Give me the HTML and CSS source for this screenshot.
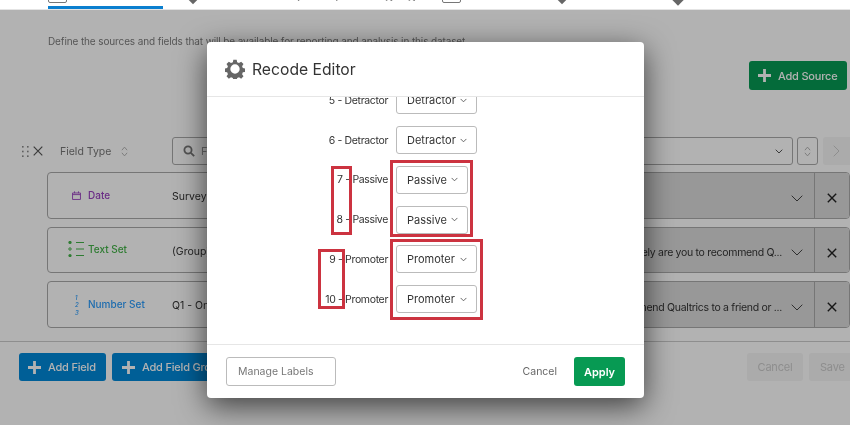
FILE: index.html
```html
<!DOCTYPE html>
<html lang="en">
<head>
<meta charset="utf-8">
<title>Recode Editor</title>
<link rel="stylesheet" href="styles.css">
</head>
<body>
<div class="page">
  <nav class="topnav">
    <div class="tab tab-active"><span class="tab-glyph"></span></div>
    <div class="tab tab-pin"><span class="pin"></span></div>
    <div class="tab tab-words">Reports, Managing</div>
    <div class="tab tab-box"><span class="tab-glyph"></span></div>
    <div class="tab tab-pin2"><span class="pin"></span></div>
    <div class="tab tab-pin3"><span class="pin diamond"></span></div>
  </nav>
  <main class="content">
    <div class="intro-row">
      <p class="intro">Define the sources and fields that will be available for reporting and analysis in this dataset.</p>
      <button class="btn btn-green add-source"><svg class="plus" viewBox="0 0 12 12"><path d="M6 0v12M0 6h12"/></svg>Add Source</button>
    </div>
    <div class="field-head">
      <svg class="drag" viewBox="0 0 7 11"><g><rect x="0" y="0" width="1.6" height="1.6"/><rect x="5" y="0" width="1.6" height="1.6"/><rect x="0" y="4.7" width="1.6" height="1.6"/><rect x="5" y="4.7" width="1.6" height="1.6"/><rect x="0" y="9.4" width="1.6" height="1.6"/><rect x="5" y="9.4" width="1.6" height="1.6"/></g></svg>
      <svg class="x-small" viewBox="0 0 10 10"><path d="M.7.7l8.6 8.6M9.3.7L.7 9.3"/></svg>
      <span class="field-type">Field Type</span>
      <svg class="updown" viewBox="0 0 8 12"><path d="M1 4.500L4 1l3 3.500M1 7.500L4 11l3-3.500"/></svg>
      <div class="search"><svg class="mag" viewBox="0 0 12 12"><circle cx="5" cy="5" r="3.600"/><path d="M7.800 7.800L11.200 11.200"/></svg><span class="search-hint">F</span><svg class="chev chev-search" viewBox="0 0 8 5"><path d="M.7.7L4 4l3.300-3.300"/></svg></div>
      <div class="sort-box"><svg class="updown" viewBox="0 0 8 12"><path d="M1 4.500L4 1l3 3.500M1 7.500L4 11l3-3.500"/></svg></div>
      <div class="next-box"><svg class="next" viewBox="0 0 7 12"><path d="M.7.7L6 6 .7 11.300"/></svg></div>
    </div>
    <div class="cards">
      <div class="card">
        <div class="card-type purple"><svg class="ico" viewBox="0 0 10 10"><path d="M.6 2.200h8.800v7.200H.6zM.6 4h8.800M2.800.4v2M7.200.4v2"/></svg><span class="type-name">Date</span></div>
        <div class="card-source">Survey Metadata</div>
        <div class="card-end"><svg class="chev chev-card" viewBox="0 0 12 7"><path d="M.7.7L6 6 11.300.7"/></svg></div>
        <div class="card-x"><svg class="x-card" viewBox="0 0 10 10"><path d="M.8.8l8.400 8.400M9.200.8L.8 9.200"/></svg></div>
      </div>
      <div class="card">
        <div class="card-type green"><svg class="ico-list" viewBox="0 0 16 16"><circle cx="2" cy="1.500" r="1.600" class="fill"/><circle cx="2" cy="8" r="1.200" class="hollow"/><circle cx="2" cy="14.500" r="1.600" class="fill"/><path d="M8 1.500h8M8 8h8M8 14.500h8"/></svg><span class="type-name">Text Set</span></div>
        <div class="card-source">(Group)</div>
        <div class="card-end"><span class="card-q">How likely are you to recommend Q...</span><svg class="chev chev-card" viewBox="0 0 12 7"><path d="M.7.7L6 6 11.300.7"/></svg></div>
        <div class="card-x"><svg class="x-card" viewBox="0 0 10 10"><path d="M.8.8l8.400 8.400M9.200.8L.8 9.200"/></svg></div>
      </div>
      <div class="card">
        <div class="card-type blue"><span class="num-stack"><i>1</i><i>2</i><i>3</i></span><span class="type-name">Number Set</span></div>
        <div class="card-source">Q1 - On</div>
        <div class="card-end"><span class="card-q">recommend Qualtrics to a friend or ...</span><svg class="chev chev-card" viewBox="0 0 12 7"><path d="M.7.7L6 6 11.300.7"/></svg></div>
        <div class="card-x"><svg class="x-card" viewBox="0 0 10 10"><path d="M.8.8l8.400 8.400M9.200.8L.8 9.200"/></svg></div>
      </div>
    </div>
    <footer class="page-foot">
      <button class="btn btn-blue add-field"><svg class="plus" viewBox="0 0 12 12"><path d="M6 0v12M0 6h12"/></svg>Add Field</button>
      <button class="btn btn-blue"><svg class="plus" viewBox="0 0 12 12"><path d="M6 0v12M0 6h12"/></svg>Add Field Group</button>
      <span class="spacer"></span>
      <button class="btn btn-muted btn-cancel">Cancel</button>
      <button class="btn btn-muted btn-save">Save</button>
    </footer>
  </main>
  <div class="overlay"></div>
  <section class="modal">
    <header class="modal-head">
      <svg class="gear" viewBox="0 0 24 24"><path fill-rule="evenodd" d="M10 1h4l.6 3 2.200.9 2.600-1.700 2.800 2.800-1.700 2.600.9 2.200 3 .6v4l-3 .6-.9 2.200 1.700 2.600-2.800 2.800-2.600-1.700-2.200.9-.6 3h-4l-.6-3-2.200-.9-2.600 1.700-2.800-2.800 1.700-2.600-.9-2.200-3-.6v-4l3-.6.9-2.200-1.700-2.600 2.800-2.800 2.600 1.700L9.400 4zM12 6.400a5.600 5.600 0 1 0 0 11.200a5.600 5.600 0 0 0 0-11.200z"/></svg>
      <h1>Recode Editor</h1>
    </header>
    <div class="modal-body">
      <div class="rows">
        <div class="row"><span class="row-label">5 - Detractor</span><div class="select sel-wide">Detractor<svg class="chev chev-sel" viewBox="0 0 8 5"><path d="M.7.7L4 4l3.300-3.300"/></svg></div></div>
        <div class="row"><span class="row-label">6 - Detractor</span><div class="select sel-wide">Detractor<svg class="chev chev-sel" viewBox="0 0 8 5"><path d="M.7.7L4 4l3.300-3.300"/></svg></div></div>
        <div class="row"><span class="row-label">7 - Passive</span><div class="select sel-narrow">Passive<svg class="chev chev-sel" viewBox="0 0 8 5"><path d="M.7.7L4 4l3.300-3.300"/></svg></div></div>
        <div class="row"><span class="row-label">8 - Passive</span><div class="select sel-narrow">Passive<svg class="chev chev-sel" viewBox="0 0 8 5"><path d="M.7.7L4 4l3.300-3.300"/></svg></div></div>
        <div class="row"><span class="row-label">9 - Promoter</span><div class="select sel-wide">Promoter<svg class="chev chev-sel" viewBox="0 0 8 5"><path d="M.7.7L4 4l3.300-3.300"/></svg></div></div>
        <div class="row"><span class="row-label">10 - Promoter</span><div class="select sel-wide">Promoter<svg class="chev chev-sel" viewBox="0 0 8 5"><path d="M.7.7L4 4l3.300-3.300"/></svg></div></div>
      </div>
    </div>
    <footer class="modal-foot">
      <button class="btn-labels">Manage Labels</button>
      <span class="spacer"></span>
      <button class="btn-text">Cancel</button>
      <button class="btn-apply">Apply</button>
    </footer>
  </section>
  <div class="mark mark-a"></div>
  <div class="mark mark-b"></div>
  <div class="mark mark-c"></div>
  <div class="mark mark-d"></div>
</div>
</body>
</html>
```

FILE: styles.css
```css
* { box-sizing: border-box; }
html, body { margin: 0; padding: 0; }
body { font-family: Inter, "Liberation Sans", sans-serif; color: #333; background: #fff; }
button { font-family: inherit; }
.page { position: relative; width: 850px; height: 425px; overflow: hidden; background: #fff; filter: blur(.35px); }
.spacer { flex: 1; }

/* top nav: only the bottom edge is in view */
.topnav { height: 10px; border-bottom: 1px solid #e4e4e4; overflow: hidden; display: flex; }
.tab { height: 9px; flex: none; }
.tab-active { width: 115px; margin-left: 48px; border-bottom: 3px solid #0b7fcf; }
.tab-glyph { display: block; width: 19px; height: 12px; margin-top: -9px; border: 1px solid #777; border-radius: 2px; }
.tab-pin { width: 27px; margin-left: 27px; }
.pin { display: block; width: 6px; height: 6px; margin-top: -3px; background: #666; transform: rotate(45deg); }
.tab-words { width: 164px; margin-left: 61px; font-size: 15px; letter-spacing: .3px; line-height: 15px; height: 15px; margin-top: -14px; color: #888; white-space: nowrap; overflow: hidden; }
.tab-box { width: 117px; }
.tab-pin2 { width: 115px; }
.tab-pin3 { width: 60px; }
.diamond { width: 8px; height: 8px; margin-top: -4px; }

/* page */
.intro-row { height: 80px; padding: 0 3px 0 48px; display: flex; align-items: flex-start; justify-content: space-between; }
.intro { margin: 25px 0 0; font-size: 10px; letter-spacing: -.12px; line-height: 12px; color: #7c7c7c; white-space: nowrap; }
.btn { border: 0; border-radius: 3px; height: 28px; font-size: 11px; letter-spacing: -.2px; font-weight: 500; color: #fff; display: inline-flex; align-items: center; padding: 0 10px; white-space: nowrap; }
.plus { width: 13px; height: 13px; margin-right: 7px; fill: none; stroke: #fff; stroke-width: 2.6; flex: none; }
.btn-green { background: #079a53; }
.add-source { margin-top: 51px; height: 29px; width: 98px; padding: 0 9px; flex: none; }
.field-head { height: 35px; margin-top: 47px; padding-bottom: 7px; display: flex; align-items: center; }
.drag { width: 7px; height: 11px; margin-left: 22px; fill: #888; flex: none; }
.x-small { width: 10px; height: 10px; margin-left: 4px; fill: none; stroke: #555; stroke-width: 1.2; flex: none; }
.field-type { width: 50px; margin-left: 17px; font-size: 10.5px; color: #777; white-space: nowrap; }
.updown { width: 7px; height: 11px; fill: none; stroke: #aaa; stroke-width: 1; flex: none; }
.field-head > .updown { margin-left: 11px; }
.search { width: 621px; height: 28px; margin-left: 44px; border: 1px solid #aaa; border-radius: 3px; display: flex; align-items: center; padding: 0 9px 0 10px; background: #fff; }
.mag { width: 12px; height: 12px; fill: none; stroke: #777; stroke-width: 1.8; flex: none; }
.search-hint { font-size: 11px; color: #999; margin-left: 6px; flex: 1; }
.chev { fill: none; stroke: #555; stroke-width: 1; flex: none; }
.chev-search { width: 8px; height: 5px; }
.sort-box { width: 21px; height: 28px; margin-left: 4px; border: 1px solid #aaa; border-radius: 3px; display: flex; align-items: center; justify-content: center; }
.next-box { width: 27px; height: 28px; margin-left: 5px; background: #f5f5f5; border-radius: 3px 0 0 3px; display: flex; align-items: center; justify-content: center; }
.next { width: 7px; height: 12px; fill: none; stroke: #ccc; stroke-width: 1; }

.cards { margin-left: 47px; display: flex; flex-direction: column; gap: 8px; }
.card { height: 46.5px; display: flex; border: 1px solid #aaa; border-radius: 4px; align-items: stretch; background: #fff; }
.card-type { width: 124px; display: flex; align-items: center; padding-left: 24px; font-size: 10px; font-weight: 500; position: relative; }
.type-name { position: absolute; left: 40px; top: 15.5px; white-space: nowrap; }
.purple { color: #9a42c0; }
.green { color: #43b248; }
.blue { color: #2c9cfa; }
.ico { width: 9px; height: 9px; margin-top: 1px; fill: none; stroke: currentColor; stroke-width: 1; }
.ico-list { width: 16px; height: 16px; margin-left: -4px; margin-top: -1px; fill: none; stroke: currentColor; stroke-width: 1; }
.ico-list .fill { fill: currentColor; stroke: none; }
.num-stack { display: flex; flex-direction: column; font-size: 6px; line-height: 7.5px; margin-left: 3px; margin-top: 1px; }
.num-stack i { display: block; }
.card-source { width: 240px; font-size: 10.5px; color: #333; padding-top: 17px; white-space: nowrap; }
.card-end { flex: 1; background: #dadada; display: flex; align-items: center; justify-content: flex-end; padding: 6px 11px 0 0; margin-left: 100px; min-width: 0; overflow: hidden; }
.card-q { font-size: 10.5px; letter-spacing: -.3px; color: #333; margin-right: 9px; white-space: nowrap; }
.chev-card { width: 12px; height: 7px; stroke: #444; }
.card-x { width: 35px; background: #dadada; border-left: 1px solid #aaa; display: flex; align-items: center; justify-content: center; padding-top: 6px; border-radius: 0 3px 3px 0; }
.x-card { width: 10px; height: 10px; fill: none; stroke: #222; stroke-width: 1.4; }

.page-foot { margin-top: 13.5px; border-top: 1px solid #ccc; padding: 11px 0 0 19px; display: flex; gap: 6px; }
.btn-blue { background: #0088d9; padding: 0 10px 0 10px; }
.add-field { width: 87px; padding-left: 9px; }
.btn-muted { background: #f5f5f5; color: #cbcbcb; font-weight: 400; }
.btn-cancel { width: 56px; justify-content: center; padding: 0; }
.btn-save { width: 41px; padding: 0 0 0 11px; border-radius: 3px 0 0 3px; }

.overlay { position: absolute; left: 0; right: 0; top: 10px; bottom: 0; background: rgba(0, 0, 0, .3); }

/* modal */
.modal { position: absolute; left: 207px; top: 42px; width: 437px; height: 356px; background: #fff; border-radius: 4px; box-shadow: 0 8px 30px rgba(0, 0, 0, .65); display: flex; flex-direction: column; overflow: hidden; }
.modal-head { height: 55px; flex: none; border-bottom: 1px solid #e6e6e6; display: flex; align-items: center; padding-left: 18px; gap: 7px; }
.gear { width: 20px; height: 20px; fill: #666; flex: none; }
.modal-head h1 { margin: 0; font-size: 15.7px; font-weight: 400; color: #333; }
.modal-body { flex: 1; overflow: hidden; }
.rows { margin-top: -10.75px; display: flex; flex-direction: column; gap: 11.75px; }
.row { display: flex; align-items: center; height: 28px; }
.row-label { width: 181px; text-align: right; font-size: 10.5px; letter-spacing: -.35px; color: #333; white-space: nowrap; }
.select { height: 28px; margin-left: 8px; border: 1px solid #bbb; border-radius: 3px; display: flex; align-items: center; justify-content: space-between; padding: 0 9px 0 10px; font-size: 11px; color: #333; }
.sel-wide { width: 81px; }
.sel-narrow { width: 72px; }
.chev-sel { width: 7px; height: 5px; }
.modal-foot { height: 54px; flex: none; border-top: 1px solid #e6e6e6; display: flex; align-items: flex-start; padding: 12px 19px 0 19px; }
.btn-labels { width: 110px; height: 29px; background: #fff; border: 1px solid #bbb; border-radius: 3px; font-size: 10.5px; color: #777; text-align: left; padding: 0 0 0 11px; }
.btn-text { border: 0; background: none; height: 29px; font-size: 10.5px; color: #666; padding: 0; margin-right: 17px; }
.btn-apply { width: 51px; height: 29px; border: 0; border-radius: 3px; background: #079a53; color: #fff; font-size: 11px; font-weight: 600; }

/* annotation boxes drawn over the screenshot */
.mark { position: absolute; border: 3px solid #cc3340; }
.mark-a { left: 331px; top: 166px; width: 21px; height: 69px; }
.mark-b { left: 318px; top: 249px; width: 27px; height: 60px; }
.mark-c { left: 390px; top: 160px; width: 83px; height: 77px; }
.mark-d { left: 390px; top: 239px; width: 93px; height: 81px; }
```
